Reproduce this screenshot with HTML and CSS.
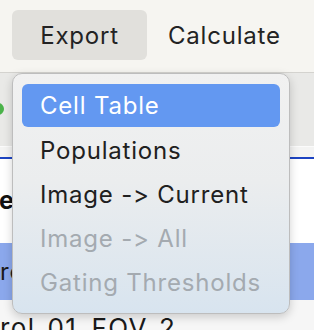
FILE: index.html
```html
<!DOCTYPE html>
<html>
<head>
<meta charset="utf-8">
<link rel="stylesheet" href="styles.css">
</head>
<body>
<div class="app">
  <div class="topbar">
    <div class="tb-btn tb-active">Export</div>
    <div class="tb-btn tb-plain">Calculate</div>
  </div>
  <div class="toolbar"><span class="status-dot"></span></div>
  <div class="tab-strip"></div>
  <div class="content">
    <div class="heading">e</div>
    <div class="row row-selected">rc</div>
    <div class="row row-last">rol_01_FOV_2</div>
  </div>
  <div class="menu">
    <div class="menu-item menu-item-hover">Cell Table</div>
    <div class="menu-item">Populations</div>
    <div class="menu-item">Image -&gt; Current</div>
    <div class="menu-item menu-item-disabled">Image -&gt; All</div>
    <div class="menu-item menu-item-disabled">Gating Thresholds</div>
  </div>
</div>
</body>
</html>
```

FILE: styles.css
```css
html, body {
  margin: 0;
  padding: 0;
}
body {
  font-family: Inter, "Noto Sans", "Liberation Sans", sans-serif;
  font-feature-settings: "calt" 0, "liga" 0;
  background: #f6f6f6;
  width: 314px;
  height: 330px;
  overflow: hidden;
}
.app {
  position: relative;
  width: 314px;
  height: 330px;
  overflow: hidden;
}
.topbar {
  height: 72px;
  box-sizing: border-box;
  padding: 10px 0 0 12px;
  background: #f6f5f1;
  display: flex;
  align-items: flex-start;
}
.tb-btn {
  height: 50px;
  display: flex;
  align-items: center;
  font-size: 24px;
  letter-spacing: 0.8px;
  color: #232323;
  box-sizing: border-box;
}
.tb-active {
  background: #e1e0dc;
  border-radius: 6px;
  width: 135px;
  justify-content: center;
}
.tb-plain {
  padding-left: 21px;
}
.toolbar {
  height: 74px;
  box-sizing: border-box;
  border-top: 1px solid #d4d3cf;
  background: #e9e9e7;
  display: flex;
  align-items: center;
}
.status-dot {
  width: 12px;
  height: 12px;
  border-radius: 50%;
  background: #4bb34a;
  margin-left: -8px;
  margin-top: -2px;
}
.tab-strip {
  height: 10px;
  background: #f4f4f3;
  border-top: 1px solid #fbfbfb;
  border-bottom: 2px solid #1d44c2;
}
.content {
  background: #ffffff;
  height: 200px;
}
.heading {
  font-weight: bold;
  font-size: 25px;
  color: #111;
  height: 84px;
  box-sizing: border-box;
  padding-top: 26px;
  margin-left: -1px;
  white-space: nowrap;
}
.row {
  font-size: 24px;
  letter-spacing: 0.8px;
  color: #1a1a1a;
  white-space: nowrap;
  height: 57px;
  box-sizing: border-box;
  padding-top: 14px;
  background: #f6f6f6;
}
.row-selected {
  background: #8ba8ec;
}
.row-last {
  font-size: 26px;
  letter-spacing: 1.4px;
  padding-top: 12px;
}
.menu {
  position: absolute;
  left: 12px;
  top: 73px;
  width: 278px;
  box-sizing: border-box;
  padding: 10px 9px 9px 9px;
  border-radius: 10px;
  border: 1px solid #bdbdbd;
  background: linear-gradient(#f1f1f1 0%, #ebedee 45%, #d8e4ef 100%);
  box-shadow: 0 3px 10px rgba(0, 0, 0, 0.18);
}
.menu-item {
  height: 44px;
  display: flex;
  align-items: center;
  padding-left: 18px;
  font-size: 24px;
  letter-spacing: 0.8px;
  color: #202020;
  border-radius: 6px;
  white-space: nowrap;
}
.menu-item-hover {
  background: #6398f1;
  color: #ffffff;
  height: 43px;
  margin-bottom: 1px;
}
.menu-item-disabled {
  color: #a4aab0;
}
```
